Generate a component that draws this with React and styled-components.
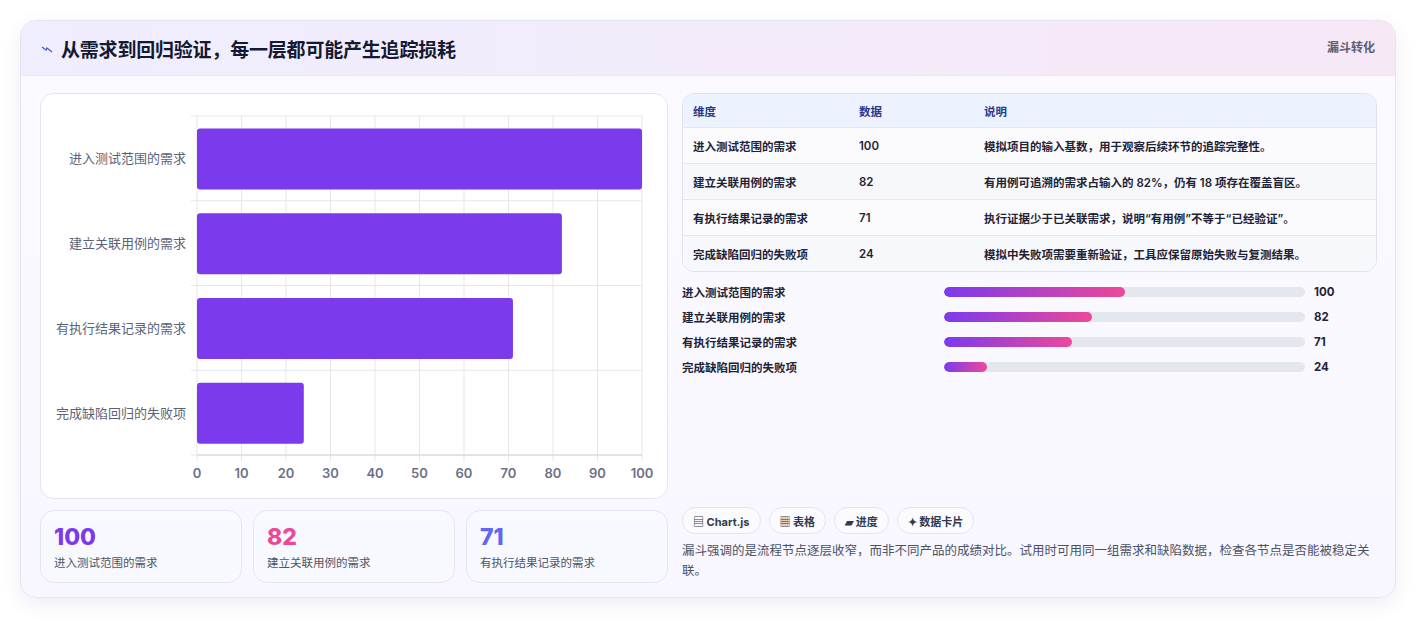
import React from 'react'
import styled, { createGlobalStyle } from 'styled-components'

const Global = createGlobalStyle`
  body { margin: 0; background: #fff; font-family: Inter, "Noto Sans CJK SC", sans-serif; }
`

const Page = styled.div`
  padding: 20px 21px 21px 20px;
`

const Card = styled.div`
  border: 1px solid #e6e4f3;
  border-radius: 16px;
  background: linear-gradient(180deg, #fbfaff, #f8f7ff);
  box-shadow: 0 6px 18px rgba(90, 80, 150, 0.1);
  overflow: hidden;
  height: 578px;
  box-sizing: border-box;
`

const Header = styled.div`
  height: 55px;
  box-sizing: border-box;
  display: flex;
  align-items: flex-start;
  justify-content: space-between;
  padding: 14px 20px 0 20px;
  background: linear-gradient(90deg, #efeefe, #f7e8f6);
  border-bottom: 1px solid #ebe8f5;
`

const Title = styled.h1`
  margin: 0;
  font-size: 19px;
  font-weight: 700;
  color: #151a33;
  display: flex;
  align-items: center;
  gap: 8px;
  letter-spacing: -0.2px;
`

const Tag = styled.span`
  font-size: 12px;
  font-weight: 700;
  color: #5b6175;
  margin-top: 3px;
`

const Body = styled.div`
  display: grid;
  grid-template-columns: 628px 1fr;
  gap: 14px;
  padding: 17px 18px 0 19px;
`

const Col = styled.div`
  display: flex;
  flex-direction: column;
  gap: 11px;
`

const ChartBox = styled.div`
  height: 404px;
  border: 1px solid #e4e6ef;
  border-radius: 14px;
  background: #fff;
`

const Stats = styled.div`
  display: grid;
  grid-template-columns: repeat(3, 1fr);
  gap: 11px;
`

const Stat = styled.div`
  height: 73px;
  box-sizing: border-box;
  border: 1px solid #e2e6f2;
  border-radius: 14px;
  background: linear-gradient(180deg, #f9f9ff, #f7f9fe);
  padding: 12px 13px;
`

const StatNum = styled.div`
  font-size: 23px;
  font-weight: 800;
  color: ${p => p.$c};
  line-height: 28px;
`

const StatLabel = styled.div`
  font-size: 11.5px;
  color: #4c5469;
  margin-top: 3px;
`

const Table = styled.div`
  border: 1px solid #dfe3ef;
  border-radius: 12px;
  overflow: hidden;
  background: #fafbfe;
`

const Row = styled.div`
  display: grid;
  grid-template-columns: 166px 125px 1fr;
  height: ${p => (p.$head ? 33 : 35)}px;
  align-items: center;
  padding-left: 10px;
  font-size: 11.5px;
  font-weight: ${p => (p.$head ? 700 : 600)};
  color: ${p => (p.$head ? '#2a3a8c' : '#1e2436')};
  background: ${p => (p.$head ? '#edf3fe' : p.$alt ? '#f7f8fc' : '#fbfbfe')};
  border-top: ${p => (p.$first ? 'none' : '1px solid #e4e7f0')};
`

const Bars = styled.div`
  display: flex;
  flex-direction: column;
  gap: 9px;
  margin-top: 1px;
`

const BarRow = styled.div`
  display: grid;
  grid-template-columns: 262px 361px 1fr;
  gap: 0;
  align-items: center;
  font-size: 11.5px;
  font-weight: 600;
  color: #1e2436;
  height: 16px;
`

const Track = styled.div`
  height: 10px;
  border-radius: 5px;
  background: #e4e7ee;
  overflow: hidden;
`

const Fill = styled.div`
  height: 100%;
  border-radius: 5px;
  background: linear-gradient(90deg, #7c3aed, #ec4899);
`

const Value = styled.span`
  padding-left: 9px;
  font-weight: 700;
`

const Spacer = styled.div`
  flex: 1;
`

const Chips = styled.div`
  display: flex;
  gap: 8px;
`

const Chip = styled.span`
  height: 27px;
  box-sizing: border-box;
  padding: 0 10px;
  border: 1px solid #e2e5ee;
  border-radius: 14px;
  background: #fafbfd;
  display: flex;
  align-items: center;
  gap: 4px;
  font-size: 11px;
  font-weight: 700;
  color: #333a4d;
`

const Note = styled.p`
  margin: 7px 0 0;
  font-size: 12.5px;
  line-height: 20px;
  color: #4b5266;
`

const cats = [
  ['进入测试范围的需求', 100, '模拟项目的输入基数，用于观察后续环节的追踪完整性。'],
  ['建立关联用例的需求', 82, '有用例可追溯的需求占输入的 82%，仍有 18 项存在覆盖盲区。'],
  ['有执行结果记录的需求', 71, '执行证据少于已关联需求，说明“有用例”不等于“已经验证”。'],
  ['完成缺陷回归的失败项', 24, '模拟中失败项需要重新验证，工具应保留原始失败与复测结果。']
]

function Chart() {
  const x0 = 156, x1 = 601, top = 22, bottom = 361
  const sx = v => x0 + ((x1 - x0) * v) / 100
  const band = (bottom - top) / 4
  return (
    <svg width="628" height="404" style={{ display: 'block' }}>
      {Array.from({ length: 11 }, (_, i) => (
        <g key={i}>
          <line x1={sx(i * 10)} x2={sx(i * 10)} y1={top} y2={bottom + 6} stroke="#e5e7ee" />
          <text x={sx(i * 10)} y={384} textAnchor="middle" fontSize="13" fill="#6b7186" fontWeight="600" fontFamily="Inter, sans-serif">{i * 10}</text>
        </g>
      ))}
      {[0, 1, 2, 3, 4].map(i => (
        <line key={i} x1={x0 - 6} x2={x1} y1={top + band * i} y2={top + band * i} stroke="#e5e7ee" />
      ))}
      <line x1={x0} x2={x1} y1={bottom} y2={bottom} stroke="#cfd3dc" />
      {cats.map(([name, v], i) => {
        const cy = top + band * i + band / 2
        return (
          <g key={name}>
            <rect x={x0} y={cy - 30} width={sx(v) - x0} height={61} rx="3" fill="#7c3aed" />
            <text x={x0 - 11} y={cy + 5} textAnchor="end" fontSize="13" fill="#5c6378" fontFamily="Inter, 'Noto Sans CJK SC', sans-serif">{name}</text>
          </g>
        )
      })}
    </svg>
  )
}

export default function App() {
  return (
    <Page>
      <Global />
      <Card>
        <Header>
          <Title>
            <svg width="12" height="10" viewBox="0 0 12 10"><path d="M1 3 L5 6 L6 4 L11 8" stroke="#4f5bd5" strokeWidth="1.4" fill="none" /></svg>
            从需求到回归验证，每一层都可能产生追踪损耗
          </Title>
          <Tag>漏斗转化</Tag>
        </Header>
        <Body>
          <Col>
            <ChartBox><Chart /></ChartBox>
            <Stats>
              {cats.slice(0, 3).map(([name, v], i) => (
                <Stat key={name}>
                  <StatNum $c={['#7c3aed', '#ec4899', '#6366f1'][i]}>{v}</StatNum>
                  <StatLabel>{name}</StatLabel>
                </Stat>
              ))}
            </Stats>
          </Col>
          <Col style={{ height: 488 }}>
            <Table>
              <Row $head $first><span>维度</span><span>数据</span><span>说明</span></Row>
              {cats.map(([n, v, d], i) => (
                <Row key={n} $alt={i % 2 === 1}><span>{n}</span><span>{v}</span><span>{d}</span></Row>
              ))}
            </Table>
            <Bars>
              {cats.map(([n, v]) => (
                <BarRow key={n}>
                  <span>{n}</span>
                  <Track><Fill style={{ width: `${v / 2}%` }} /></Track>
                  <Value>{v}</Value>
                </BarRow>
              ))}
            </Bars>
            <Spacer />
            <div>
              <Chips>
                <Chip>▤ Chart.js</Chip>
                <Chip>▦ 表格</Chip>
                <Chip>▰ 进度</Chip>
                <Chip>✦ 数据卡片</Chip>
              </Chips>
              <Note>漏斗强调的是流程节点逐层收窄，而非不同产品的成绩对比。试用时可用同一组需求和缺陷数据，检查各节点是否能被稳定关联。</Note>
            </div>
          </Col>
        </Body>
      </Card>
    </Page>
  )
}
